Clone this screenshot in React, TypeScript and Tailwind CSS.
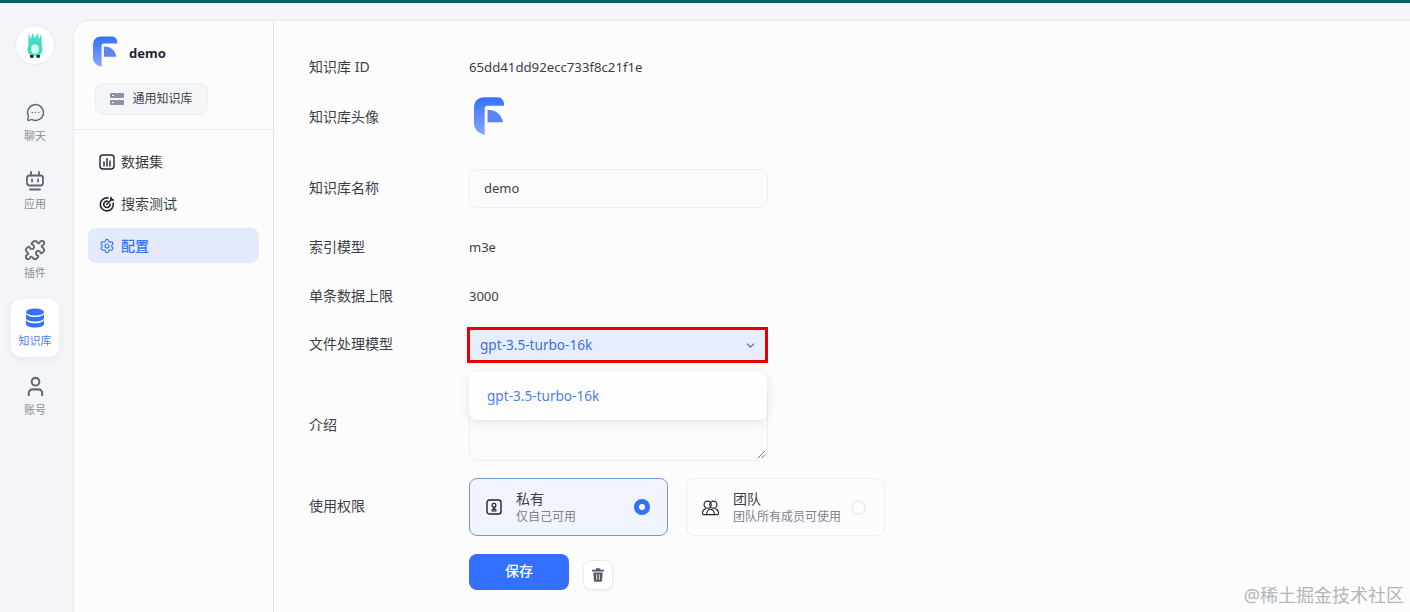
import { ChevronDown, MessageCircleMore, Puzzle, Settings, User } from "lucide-react"
import type { ReactNode } from "react"

const font = { fontFamily: '"Noto Sans", "Noto Sans CJK SC", sans-serif' }

function Logo({ className, id }: { className: string; id: string }) {
  return (
    <svg viewBox="0 0 32 40" className={className}>
      <defs>
        <linearGradient id={id} x1="0" y1="0" x2="0" y2="1">
          <stop offset="0" stopColor="#3370ff" />
          <stop offset="1" stopColor="#85a8ff" />
        </linearGradient>
      </defs>
      <path
        d="M0 11C0 4 4 0 11 0h13c4 0 7 3 7 7v2H14c-2 0-3 1-3 3v27C4 37 0 33 0 27Z"
        fill={`url(#${id})`}
      />
      <path d="M14 13c8 0 14 4 16 13H14Z" fill="#5b85f5" />
    </svg>
  )
}

function RailItem({ icon, label, active }: { icon: ReactNode; label: string; active?: boolean }) {
  return (
    <div
      className={`w-[48px] h-[58px] mb-[10.5px] rounded-[10px] flex flex-col items-center justify-center ${
        active ? "bg-white shadow-[0_2px_8px_rgba(0,0,0,0.06)] text-[#3370ff]" : "text-[#5f6672]"
      }`}
    >
      <div className="h-[22px] flex items-center justify-center">{icon}</div>
      <span className={`text-[11px] leading-[16px] mt-[4px] ${active ? "text-[#4f7fe8]" : "text-[#8a8f98]"}`}>{label}</span>
    </div>
  )
}

function NavItem({ icon, label, active }: { icon: ReactNode; label: string; active?: boolean }) {
  return (
    <div
      className={`h-[35px] mb-[7px] rounded-[8px] flex items-center pl-[11px] gap-[6px] text-[14px] ${
        active ? "bg-[#e3eafc] text-[#3370ff] font-medium" : "text-[#3a3f47]"
      }`}
    >
      {icon}
      <span>{label}</span>
    </div>
  )
}

function Row({ label, className, children }: { label: string; className: string; children: ReactNode }) {
  return (
    <div className={`flex items-center ${className}`}>
      <div className="w-[160px] shrink-0 pb-[3px] text-[14px] text-[#3a3f47]">{label}</div>
      {children}
    </div>
  )
}

export default function App() {
  return (
    <div className="relative w-[1410px] h-[612px] overflow-hidden bg-[#f4f5f8]" style={font}>
      <div className="h-[3px] bg-[#0b5f6b]" />
      <div className="flex h-[609px]">
        {/* rail */}
        <div className="w-[73px] shrink-0 flex flex-col items-center pr-[3px]">
          <div className="mt-[23px] w-[38px] h-[38px] rounded-full bg-white shadow-[0_0_3px_rgba(0,0,0,0.1)] flex items-center justify-center">
            <svg viewBox="0 0 20 30" className="w-[18px] h-[27px]">
              <path d="M3 2l2.500 6L7 1l3 6 3-6 1.500 7L17 2l.5 13c2 5 0 10-3 11H5.500C2.500 25 .5 20 2.500 15Z" fill="#3fdcc0" />
              <ellipse cx="10" cy="19" rx="4.500" ry="5.500" fill="#d4fff4" />
              <path d="M4.500 25.500h4v3h-4zM11.500 25.500h4v3h-4z" fill="#1f2937" />
            </svg>
          </div>
          <div className="h-[29.5px] shrink-0" />
          <RailItem label="聊天" icon={<MessageCircleMore className="w-[19px] h-[19px]" strokeWidth={1.8} />} />
          <RailItem
            label="应用"
            icon={
              <svg viewBox="0 0 20 20" className="w-[20px] h-[20px]" fill="none" stroke="currentColor" strokeWidth="1.8">
                <path d="M6 1v3.500M14 1v3.500" strokeLinecap="round" />
                <rect x="2" y="4.500" width="16" height="10" rx="2.500" />
                <path d="M7 8.500v2M13 8.500v2M5 18.500h10" strokeLinecap="round" />
              </svg>
            }
          />
          <RailItem label="插件" icon={<Puzzle className="w-[22px] h-[22px]" strokeWidth={2} />} />
          <RailItem
            active
            label="知识库"
            icon={
              <svg viewBox="0 0 20 20" className="w-[20px] h-[20px]" fill="currentColor">
                <ellipse cx="10" cy="4" rx="9" ry="3.600" />
                <path d="M1 6.200C3 8.400 6.500 9 10 9s7-.6 9-2.800V10c0 2-4 3.600-9 3.600S1 12 1 10Z" />
                <path d="M1 12.400c2 2.200 5.500 2.800 9 2.800s7-.6 9-2.800V16c0 2-4 3.600-9 3.600S1 18 1 16Z" />
              </svg>
            }
          />
          <RailItem label="账号" icon={<User className="w-[23px] h-[23px]" strokeWidth={2.1} />} />
        </div>

        {/* main panel */}
        <div className="flex-1 mt-[17px] flex bg-[#fcfcfd] rounded-tl-[16px] border-t border-l border-[#e8eaee]">
          <div className="w-[200px] shrink-0 border-r border-[#dfe2e8]">
            <div className="h-[109px] border-b border-[#e8eaee] pl-[19px] pt-[15px]">
              <div className="flex items-center gap-[11px]">
                <Logo id="logoA" className="w-[25px] h-[32px]" />
                <span className="pt-[3px] text-[13px] font-bold text-[#1f2430]">demo</span>
              </div>
              <div className="mt-[15px] ml-[2px] w-[113px] h-[32px] rounded-[8px] bg-[#f4f5f7] border border-[#eceef1] flex items-center justify-center gap-[8px] text-[12px] text-[#3c434d]">
                <svg viewBox="0 0 14 12" className="w-[14px] h-[12px]" fill="#8b93a3">
                  <rect width="14" height="5" rx="1" />
                  <rect y="7" width="14" height="5" rx="1" />
                  <path d="M2 2h2v1H2zM2 9h2v1H2z" fill="#fff" />
                </svg>
                通用知识库
              </div>
            </div>
            <div className="pt-[14px] pl-[14px] pr-[14px]">
              <NavItem
                label="数据集"
                icon={
                  <svg viewBox="0 0 16 16" className="w-[16px] h-[16px]" fill="none" stroke="#1f2430" strokeWidth="1.4">
                    <rect x="1" y="1" width="14" height="14" rx="3" />
                    <path d="M5 8v4M8 4.500V12M11 7v5" strokeLinecap="round" />
                  </svg>
                }
              />
              <NavItem
                label="搜索测试"
                icon={
                  <svg viewBox="0 0 16 16" className="w-[16px] h-[16px]" fill="none" stroke="#1f2430" strokeWidth="1.6">
                    <path d="M9 2a6.500 6.500 0 1 0 5.200 5.200" strokeLinecap="round" />
                    <path d="M8.500 5.200a3.200 3.200 0 1 0 2.600 2.800" strokeLinecap="round" />
                    <path d="M7.800 8.200 13 3M12 1.500v2.500h2.500" strokeLinecap="round" />
                  </svg>
                }
              />
              <NavItem active label="配置" icon={<Settings className="w-[16px] h-[16px]" strokeWidth={1.7} />} />
            </div>
          </div>

          {/* form */}
          <div className="relative flex-1 pl-[35px] text-[13px] text-[#3a3f47]">
            <Row label="知识库 ID" className="mt-[29px] h-[36px]">
              <span className="text-[13.2px]">65dd41dd92ecc733f8c21f1e</span>
            </Row>
            <Row label="知识库头像" className="mt-[12px] h-[40px]">
              <Logo id="logoB" className="w-[31px] h-[39px] ml-[5px] mb-[3px]" />
            </Row>
            <Row label="知识库名称" className="mt-[31px] h-[39px]">
              <div className="w-[299px] h-[39px] rounded-[8px] border border-[#eeeff2] bg-[#fbfbfd] flex items-center pl-[14px]">demo</div>
            </Row>
            <Row label="索引模型" className="mt-[20px] h-[40px]">
              <span>m3e</span>
            </Row>
            <Row label="单条数据上限" className="mt-[9px] h-[40px]">
              <span>3000</span>
            </Row>
            <Row label="文件处理模型" className="mt-[10px] h-[36px]">
              <div className="-ml-[2px] w-[301px] h-[36px] border-[3px] border-[#e60000] bg-[#e6edfd] flex items-center justify-between pl-[10px] pr-[8px] text-[13.6px] text-[#3f6fdc]">
                gpt-3.5-turbo-16k
                <ChevronDown className="w-[13px] h-[13px]" strokeWidth={2.2} />
              </div>
            </Row>
            <Row label="介绍" className="mt-[27px] h-[71px]">
              <div className="relative w-[299px] h-[71px] rounded-[8px] border border-[#eeeff2] bg-[#fbfbfd]">
                <svg viewBox="0 0 10 10" className="absolute right-[1px] bottom-[1px] w-[9px] h-[9px]" stroke="#555" strokeWidth="0.9">
                  <path d="M1 9 9 1M5 9l4-4" />
                </svg>
              </div>
            </Row>
            <Row label="使用权限" className="mt-[17px] h-[58px]">
              <div className="flex gap-[18px]">
                <div className="w-[199px] h-[58px] rounded-[8px] border border-[#6f97ea] bg-[#f0f4fe] flex items-center pl-[16px] pr-[17px]">
                  <svg viewBox="0 0 16 16" className="w-[16px] h-[16px] shrink-0" fill="none" stroke="#1f2430" strokeWidth="1.4">
                    <rect x="1" y="1" width="14" height="14" rx="2.500" />
                    <circle cx="8" cy="6.200" r="1.900" strokeWidth="1.200" />
                    <path d="M7.300 8v2.800H5.500M8.700 8v2.800h1.800M5.500 12h5" strokeWidth="1.100" />
                  </svg>
                  <div className="ml-[14px] pt-[2px] flex-1">
                    <div className="text-[14px] leading-[18px]">私有</div>
                    <div className="text-[12px] leading-[18px] text-[#7d838d]">仅自己可用</div>
                  </div>
                  <div className="w-[16px] h-[16px] rounded-full border-[5px] border-[#3370ff] bg-white" />
                </div>
                <div className="w-[199px] h-[58px] rounded-[8px] border border-[#eceef1] bg-[#fcfcfd] flex items-center pl-[14px] pr-[18px]">
                  <svg viewBox="0 0 20 18" className="w-[19px] h-[17px] shrink-0" fill="none" stroke="#1f2430" strokeWidth="1.2">
                    <circle cx="7" cy="6" r="3.800" />
                    <circle cx="13" cy="6" r="3.800" />
                    <path d="M2 16.500c-1.500-3 1-6 3.500-6.500M18 16.500c1.500-3-1-6-3.500-6.500M2 16.500h16M6 16c0-3 2-5 4-5s4 2 4 5" />
                  </svg>
                  <div className="ml-[13px] pt-[2px] flex-1 whitespace-nowrap">
                    <div className="text-[14px] leading-[18px]">团队</div>
                    <div className="text-[12px] leading-[18px] text-[#7d838d]">团队所有成员可使用</div>
                  </div>
                  <div className="w-[15px] h-[15px] shrink-0 rounded-full border-2 border-[#eceef0] bg-white" />
                </div>
              </div>
            </Row>
            <div className="mt-[18px] ml-[160px] flex items-end gap-[14px]">
              <div className="w-[100px] h-[36px] pb-[3px] rounded-[8px] bg-[#3370ff] text-white text-[14px] font-medium flex items-center justify-center">保存</div>
              <div className="w-[30px] h-[30px] rounded-[8px] border border-[#e8eaee] bg-white shadow-[0_1px_2px_rgba(0,0,0,0.05)] flex items-center justify-center">
                <svg viewBox="0 0 14 16" className="w-[12px] h-[14px]" fill="#555b66">
                  <path d="M5 0h4l1 2h4v2H0V2h4Z" />
                  <path d="M1.500 5h11l-.8 9.500c0 .9-.7 1.500-1.500 1.500H3.800c-.8 0-1.500-.6-1.500-1.500ZM5 7v6.500h1V7Zm3 0v6.500h1V7Z" fillRule="evenodd" />
                </svg>
              </div>
            </div>
            {/* dropdown menu over the textarea */}
            <div className="absolute left-[195px] top-[351px] w-[298px] h-[48px] rounded-[8px] bg-white shadow-[0_2px_10px_rgba(0,0,0,0.1)] p-[8px]">
              <div className="h-[32px] rounded-[4px] bg-[#fdfdfe] flex items-center pl-[10px] text-[13.6px] text-[#4f7fe8]">gpt-3.5-turbo-16k</div>
            </div>
          </div>
        </div>
      </div>
      <div className="absolute right-[6px] bottom-[6px] text-[18px] leading-[22px] text-[#b3b5b8]">@稀土掘金技术社区</div>
    </div>
  )
}
